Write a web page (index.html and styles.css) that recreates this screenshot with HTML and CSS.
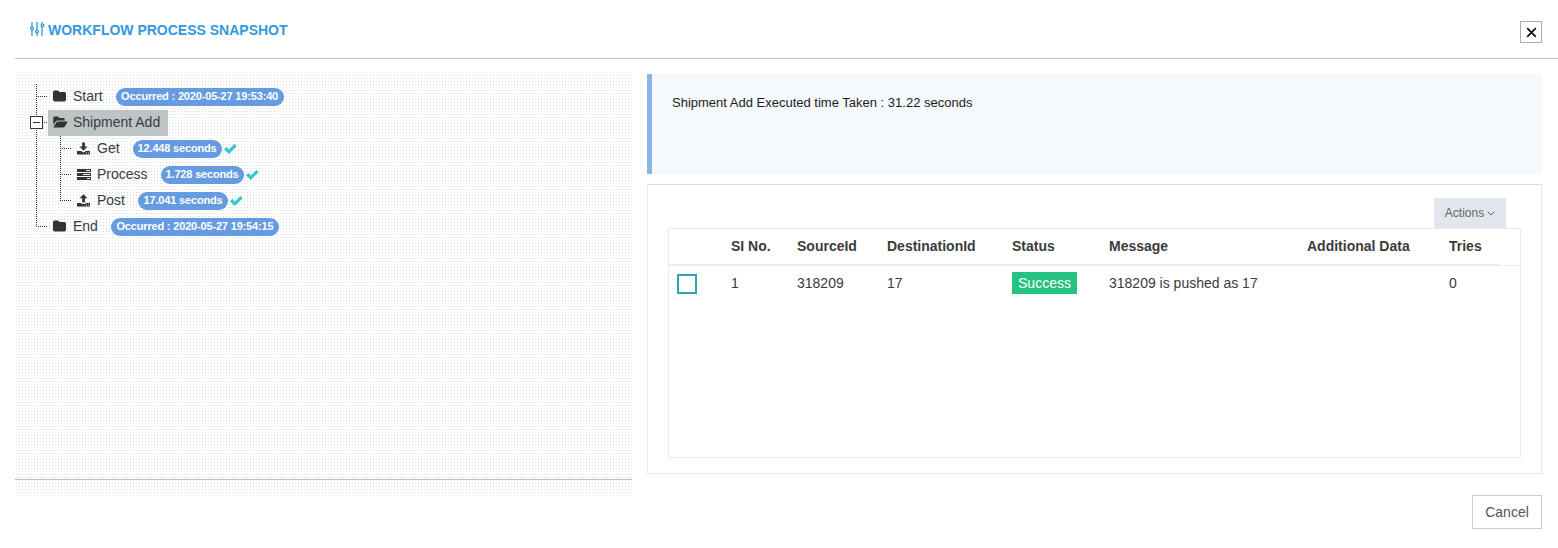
FILE: index.html
```html
<!DOCTYPE html>
<html lang="en">
<head>
<meta charset="utf-8">
<title>Workflow Process Snapshot</title>
<link rel="stylesheet" href="styles.css">
</head>
<body>
<svg class="defs" width="0" height="0">
  <symbol id="folder" viewBox="0 0 14 12"><path d="M0 2Q0 .5 1.500.5h3.300Q6.300.5 6.300 2h5.200Q13 2 13 3.600v6.200q0 1.700-1.700 1.700H1.700Q0 11.500 0 9.800z"/></symbol>
  <symbol id="open" viewBox="0 0 15 12"><path d="M.3 9V2Q.3.5 1.800.5h2.700Q6 .5 6 2h4.200q1.500 0 1.500 1.500v1H5.200q-1.600 0-2.700 1.300zM1.100 11.500q-.8 0-.4-.7l2.700-4.200q.6-1 1.800-1h8.700q.9 0 .4.8l-2.500 4.100q-.6 1-1.800 1z"/></symbol>
  <symbol id="get" viewBox="0 0 13 13"><path d="M5.200.5h2.700v4h2.600L6.500 8.700 2.500 4.500h2.700zM0 9h4.400l1 1q1.100.9 2.200 0l1-1H13v3.500H0z"/><path class="hole" d="M9 10.500h1v1H9zm2 0h1v1h-1z"/></symbol>
  <symbol id="post" viewBox="0 0 13 13"><path d="M6.500.3l4 4H7.900v4.300H5.200V4.300H2.500zM0 9h4.300q.1.900 1 .9h2.400q.9 0 1-.9H13v3.500H0z"/><path class="hole" d="M9 10.500h1v1H9zm2 0h1v1h-1z"/></symbol>
  <symbol id="process" viewBox="0 0 14 11"><path d="M0 0h14v3H0zm0 4h14v3H0zm0 4h14v3H0z"/><path class="hole" d="M9 1h4v1H9zM6 5h7v1H6zm4 4h3v1h-3z"/></symbol>
  <symbol id="check" viewBox="0 0 13 10"><path d="M0 5.200L2.300 3l2.500 2.400L10.400 0l2.300 2.200L4.900 9.900z"/></symbol>
</svg>
<header class="header">
  <h1 class="title">
    <svg class="sliders" width="15" height="16" viewBox="0 0 15 16"><path d="M2 1v5m0 3v6M7 1v8m0 3v3M12 1v2m0 3v9"/><circle cx="2" cy="7.500" r="1.400"/><circle cx="7" cy="10.500" r="1.400"/><circle cx="12.500" cy="4.500" r="1.400"/></svg>
    <span class="title-text">WORKFLOW PROCESS SNAPSHOT</span>
  </h1>
  <button class="close" aria-label="Close"><svg width="11" height="11" viewBox="0 0 11 11"><path d="M1.200 1.200l8.600 8.600m0-8.600L1.200 9.800"/></svg></button>
</header>
<main class="main">
  <section class="tree-panel">
    <ul class="tree">
      <li class="node"><div class="row"><svg class="icon" width="14" height="12"><use href="#folder"/></svg><span class="label">Start</span><span class="pill w-date">Occurred : 2020-05-27 19:53:40</span></div></li>
      <li class="node"><span class="toggle"></span><div class="row selected"><svg class="icon" width="15" height="12"><use href="#open"/></svg><span class="label">Shipment Add</span></div>
        <ul class="subtree">
          <li class="node"><div class="row"><svg class="icon" width="13" height="13"><use href="#get"/></svg><span class="label">Get</span><span class="pill w-a">12.448 seconds</span><svg class="check" width="13" height="10"><use href="#check"/></svg></div></li>
          <li class="node"><div class="row"><svg class="icon" width="14" height="11"><use href="#process"/></svg><span class="label">Process</span><span class="pill w-b">1.728 seconds</span><svg class="check" width="13" height="10"><use href="#check"/></svg></div></li>
          <li class="node"><div class="row"><svg class="icon" width="13" height="13"><use href="#post"/></svg><span class="label">Post</span><span class="pill w-c">17.041 seconds</span><svg class="check" width="13" height="10"><use href="#check"/></svg></div></li>
        </ul>
      </li>
      <li class="node"><div class="row"><svg class="icon" width="14" height="12"><use href="#folder"/></svg><span class="label">End</span><span class="pill w-date">Occurred : 2020-05-27 19:54:15</span></div></li>
    </ul>
  </section>
  <section class="details">
    <div class="note">Shipment Add Executed time Taken : 31.22 seconds</div>
    <div class="card">
      <button class="actions">Actions<svg width="8" height="5" viewBox="0 0 8 5"><path d="M.7.7L4 4 7.300.7"/></svg></button>
      <div class="table-box">
        <div class="thead-wrap"><div class="cells thead"><span></span><span class="tight">SI No.</span><span>SourceId</span><span>DestinationId</span><span>Status</span><span>Message</span><span>Additional Data</span><span class="tight">Tries</span></div></div>
        <div class="cells tbody"><span class="check-cell"><span class="checkbox"></span></span><span class="tight">1</span><span>318209</span><span>17</span><span><b class="success">Success</b></span><span>318209 is pushed as 17</span><span></span><span class="tight">0</span></div>
      </div>
    </div>
  </section>
</main>
<footer class="footer"><button class="cancel">Cancel</button></footer>
</body>
</html>
```
FILE: styles.css
```css
* { box-sizing: border-box; }
body { margin: 0; height: 548px; background: #fff; color: #3b3b3b; font: 14px/20px "Liberation Sans", Arial, sans-serif; overflow: hidden; }
button { font-family: inherit; padding: 0; border-radius: 0; }
.defs { display: block; height: 0; }
.header { display: flex; justify-content: space-between; height: 59px; margin-left: 15px; padding: 21px 16px 0 15px; border-bottom: 1px solid #c3c0c0; }
.title { display: flex; margin: 0; font-size: 14px; line-height: 18px; color: #3598dc; }
.sliders { flex: none; margin-right: 3px; fill: #fff; stroke: #3598dc; stroke-width: 1.3; }
.title-text { white-space: nowrap; }
.close { display: flex; align-items: center; justify-content: center; width: 22px; height: 22px; background: #fff; border: 1px solid #9faebb; }
.close svg { fill: none; stroke: #111; stroke-width: 1.8; }
.main { display: flex; gap: 15px; padding: 15px 16px 0 15px; height: 421px; }
.tree-panel { width: 617px; height: 419px; background: linear-gradient(#bdbdbd, #bdbdbd) 0 405px / 100% 1px no-repeat, linear-gradient(90deg, transparent 1px, #fff 1px) 1px 1px / 3px 3px, linear-gradient(transparent 1px, #fff 1px) 1px 1px / 3px 3px, #dcdcdc; padding: 10px 0 0 21px; }
.tree, .subtree { margin: 0; padding: 0; list-style: none; }
.tree { position: relative; }
.subtree { position: relative; margin-left: 12px; }
.tree::before, .subtree::before { content: ""; position: absolute; left: 0; top: 0; bottom: 13px; width: 1px; background: repeating-linear-gradient(#333 0 1px, transparent 1px 2px); }
.node { position: relative; padding-left: 12px; }
.node::before { content: ""; position: absolute; left: 0; top: 12px; width: 11px; height: 1px; background: repeating-linear-gradient(90deg, #333 0 1px, transparent 1px 2px); }
.toggle { position: absolute; left: -6px; top: 6px; width: 13px; height: 13px; border: 1px solid #333; background: linear-gradient(#333, #333) center / 7px 1px no-repeat #fff; }
.row { display: flex; align-items: center; height: 26px; padding: 0 8px 0 5px; width: max-content; }
.selected { background: #bec3c6; width: 120px; }
.icon { flex: none; fill: #333; margin-top: -2px; }
.hole { fill: #eee; }
.label { height: 26px; margin-left: 6px; line-height: 24px; white-space: nowrap; }
.icon[width="15"] + .label { margin-left: 5px; }
.icon[width="13"] + .label { margin-left: 7px; }
.pill { height: 18px; margin-left: 13px; border-radius: 9px; background: #659be0; color: #fff; font: bold 11px/17px "Liberation Sans", Arial, sans-serif; letter-spacing: -.17px; text-align: center; white-space: nowrap; }
.w-date { width: 168px; }
.w-a { width: 89px; }
.w-b { width: 83px; }
.w-c { width: 90px; }
.check { fill: #36c6d3; margin: -1px 0 0 2px; }
.details { flex: 1; }
.note { height: 100px; padding: 19px 20px; border-left: 5px solid #8bb4e7; background: #f5f8fd; color: #1c1c1c; font-size: 13px; }
.card { display: flex; flex-direction: column; height: 290px; margin-top: 10px; padding: 13px 20px 15px; border: 1px solid #e7e9ea; border-top-color: #dadcdd; }
.actions { align-self: flex-end; display: flex; align-items: center; justify-content: center; gap: 3px; width: 72px; height: 30px; margin-right: 15px; border: 0; background: #e1e5ec; color: #666; font-size: 12px; }
.actions svg { fill: none; stroke: #666; }
.table-box { height: 230px; border: 1px solid #e7ecf1; }
.thead-wrap { height: 37px; border-bottom: 1px solid #e7ecf1; }
.cells { display: grid; grid-template-columns: 55px 65px 90px 125px 97px 198px 143px 58px; width: 831px; }
.cells > span { padding-left: 8px; white-space: nowrap; }
.cells > .tight { padding-left: 7px; }
.thead { height: 37px; border-bottom: 2px solid #e7ecf1; font-weight: bold; line-height: 34px; }
.tbody { height: 36px; line-height: 35px; }
.check-cell { display: flex; align-items: center; }
.checkbox { width: 20px; height: 20px; border: 2px solid #2ca5b0; background: #fff; }
.success { display: block; height: 22px; width: 65px; margin-top: 6px; text-align: center; line-height: 22px; background: #26c281; color: #fff; font-weight: normal; }
.footer { display: flex; justify-content: flex-end; padding: 15px 16px 0 0; }
.cancel { width: 70px; height: 34px; border: 1px solid #ccc; background: #fff; color: #555; font-size: 14px; }
```
